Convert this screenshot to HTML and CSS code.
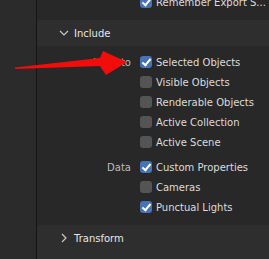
FILE: index.html
```html
<!DOCTYPE html>
<html lang="en">
<head>
    <meta charset="UTF-8">
    <meta name="viewport" content="width=device-width, initial-scale=1.0">
    <title>Export Include</title>
    <link rel="stylesheet" href="styles.css">
</head>
<body>
    <div class="app">
        <aside class="sidebar"></aside>
        <main class="props">
            <div class="panel-body top">
                <div class="row">
                    <span class="label"></span>
                    <span class="check on"></span>
                    <span class="text" title="Remember Export Settings">Remember Export S...</span>
                </div>
            </div>

            <div class="panel-header">
                <svg class="chevron" width="12" height="12" viewBox="0 0 12 12"><path d="M2 4 L6 8 L10 4" /></svg>
                <span>Include</span>
            </div>
            <div class="panel-body">
                <div class="group">
                    <div class="row">
                        <span class="label">Limit to</span>
                        <span class="check on"></span>
                        <span class="text">Selected Objects</span>
                    </div>
                    <div class="row">
                        <span class="label"></span>
                        <span class="check"></span>
                        <span class="text">Visible Objects</span>
                    </div>
                    <div class="row">
                        <span class="label"></span>
                        <span class="check"></span>
                        <span class="text">Renderable Objects</span>
                    </div>
                    <div class="row">
                        <span class="label"></span>
                        <span class="check"></span>
                        <span class="text">Active Collection</span>
                    </div>
                    <div class="row">
                        <span class="label"></span>
                        <span class="check"></span>
                        <span class="text">Active Scene</span>
                    </div>
                </div>
                <div class="group">
                    <div class="row">
                        <span class="label">Data</span>
                        <span class="check on"></span>
                        <span class="text">Custom Properties</span>
                    </div>
                    <div class="row">
                        <span class="label"></span>
                        <span class="check"></span>
                        <span class="text">Cameras</span>
                    </div>
                    <div class="row">
                        <span class="label"></span>
                        <span class="check on"></span>
                        <span class="text">Punctual Lights</span>
                    </div>
                </div>
            </div>

            <div class="panel-header">
                <svg class="chevron" width="12" height="12" viewBox="0 0 12 12"><path d="M4 2 L8 6 L4 10" /></svg>
                <span>Transform</span>
            </div>
            <div class="panel-header">
                <svg class="chevron" width="12" height="12" viewBox="0 0 12 12"><path d="M4 2 L8 6 L4 10" /></svg>
                <span>Geometry</span>
            </div>
        </main>

        <!-- annotation arrow drawn over the panel -->
        <svg class="arrow" width="269" height="259" viewBox="0 0 269 259">
            <polygon points="15,67.5 100,58 103,51 127,62 106,75 100,66 15,69" fill="#f20d0d" />
        </svg>
    </div>
</body>
</html>
```

FILE: styles.css
```css
body {
    margin: 0;
    background: #2b2b2b;
    font-family: "DejaVu Sans", sans-serif;
    font-size: 10px;
    color: #dcdcdc;
    overflow: hidden;
}
.app {
    display: flex;
    height: 259px;
    position: relative;
}
.sidebar {
    width: 36px;
    flex: none;
    background: #2b2b2b;
    border-right: 1px solid #151515;
}
.props {
    flex: 1;
    min-width: 0;
    margin-top: -8px;
    background: #2e2e2e;
}
.panel-body {
    background: #282828;
    padding: 6px 0 8px;
}
.panel-body.top {
    padding-top: 0;
    padding-bottom: 8px;
}
.group + .group {
    margin-top: 5px;
}
.row {
    display: flex;
    align-items: center;
    height: 20px;
}
.label {
    width: 103px;
    flex: none;
    text-align: right;
    color: #bdbdbd;
    padding-right: 9px;
    box-sizing: border-box;
}
.check {
    width: 12px;
    height: 12px;
    flex: none;
    border-radius: 3px;
    background: #545454;
    margin-right: 4px;
    position: relative;
}
.check.on {
    background: #4772b3;
}
.check.on::after {
    content: "";
    position: absolute;
    left: 4px;
    top: 1px;
    width: 3px;
    height: 7px;
    border: solid #fff;
    border-width: 0 2px 2px 0;
    transform: rotate(40deg);
}
.text {
    white-space: nowrap;
}
.panel-header {
    display: flex;
    align-items: center;
    height: 26px;
    padding-left: 21px;
    color: #e6e6e6;
    background: #2e2e2e;
}
.panel-header + .panel-header {
    margin-top: 3px;
}
.chevron {
    fill: none;
    stroke: #c8c8c8;
    stroke-width: 1.2;
    margin-right: 4px;
}
.arrow {
    position: absolute;
    left: 0;
    top: 0;
    pointer-events: none;
}
```
